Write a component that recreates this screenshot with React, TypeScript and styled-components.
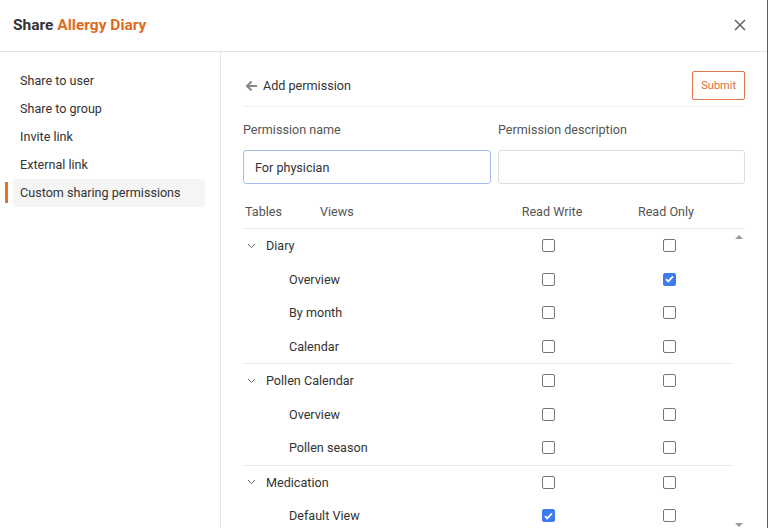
import React from 'react';
import styled, { createGlobalStyle } from 'styled-components';

const GlobalStyle = createGlobalStyle`
  html, body {
    margin: 0;
    padding: 0;
    overflow: hidden;
    background: #ffffff;
  }
  * {
    box-sizing: border-box;
  }
`;

const Dialog = styled.div`
  width: 768px;
  height: 528px;
  display: flex;
  flex-direction: column;
  font-family: Roboto, 'Liberation Sans', sans-serif;
  color: #333333;
  font-size: 12.6px;
  border-right: 1px solid #5f5f5f;
  overflow: hidden;
`;

const Header = styled.div`
  height: 52px;
  flex-shrink: 0;
  display: flex;
  align-items: center;
  justify-content: space-between;
  padding: 0 20px 2px 13px;
  border-bottom: 1px solid #e4e4e4;
`;

const Title = styled.div`
  font-size: 15.5px;
  font-weight: 700;
  color: #333333;
`;

const Accent = styled.span`
  color: #e06b1f;
`;

const CloseButton = styled.button`
  border: none;
  background: none;
  padding: 0;
  width: 14px;
  height: 14px;
  display: flex;
  align-items: center;
  justify-content: center;
  cursor: pointer;
`;

const Body = styled.div`
  flex: 1;
  display: flex;
  min-height: 0;
`;

const Sidebar = styled.div`
  width: 221px;
  flex-shrink: 0;
  border-right: 1px solid #e8e8e8;
  padding: 15px 15px 0 13px;
  display: flex;
  flex-direction: column;
`;

const NavItem = styled.div<{ $active?: boolean }>`
  position: relative;
  height: 28px;
  line-height: 28px;
  padding-left: 7px;
  color: #333333;
  background: ${p => (p.$active ? '#f5f5f5' : 'transparent')};
  border-radius: 2px;
  &::before {
    content: '';
    display: ${p => (p.$active ? 'block' : 'none')};
    position: absolute;
    left: -8px;
    top: 3px;
    width: 3px;
    height: 21px;
    background: #e8701f;
  }
`;

const Main = styled.div`
  flex: 1;
  padding: 19px 22px 0 22px;
  display: flex;
  flex-direction: column;
  min-width: 0;
`;

const TopRow = styled.div`
  display: flex;
  align-items: center;
  justify-content: space-between;
  padding-bottom: 6px;
  border-bottom: 1px solid #f0f0f0;
`;

const BackLink = styled.div`
  display: flex;
  align-items: center;
  gap: 5px;
  padding-left: 2px;
  color: #333333;
`;

const SubmitButton = styled.button`
  height: 29px;
  padding: 0 8px;
  border: 1px solid #e07548;
  border-radius: 2px;
  background: #ffffff;
  color: #e06b3a;
  font-family: Roboto, 'Liberation Sans', sans-serif;
  font-size: 11px;
`;

const FieldRow = styled.div`
  display: grid;
  grid-template-columns: 248px 247px;
  column-gap: 7px;
  margin-top: 15px;
`;

const Field = styled.div`
  display: flex;
  flex-direction: column;
  gap: 12px;
`;

const Label = styled.div`
  color: #555555;
  line-height: 16px;
`;

const Input = styled.input<{ $focused?: boolean }>`
  height: 34px;
  border: 1px solid ${p => (p.$focused ? '#a7bff0' : '#dddddd')};
  border-radius: 3px;
  padding: 0 11px;
  font-family: Roboto, 'Liberation Sans', sans-serif;
  font-size: 12.6px;
  color: #333333;
  outline: none;
`;

const TableHead = styled.div`
  display: grid;
  grid-template-columns: 248px 114px 128px 13px;
  height: 34px;
  margin-top: 11px;
  align-items: center;
  border-bottom: 1px solid #e8e8e8;
  color: #555555;
`;

const HeadNames = styled.div`
  display: flex;
  gap: 38px;
  padding-left: 2px;
`;

const HeadCell = styled.div<{ $shift?: number }>`
  text-align: center;
  transform: translateX(${p => p.$shift || 0}px);
`;

const ScrollArea = styled.div`
  flex: 1;
  display: flex;
  min-height: 0;
`;

const Rows = styled.div`
  width: 490px;
  display: flex;
  flex-direction: column;
`;

const Group = styled.div<{ $first?: boolean }>`
  border-top: ${p => (p.$first ? 'none' : '1px solid #e8e8e8')};
`;

const Row = styled.div`
  display: grid;
  grid-template-columns: 248px 114px 128px;
  height: 33.5px;
  align-items: center;
`;

const NameCell = styled.div<{ $indent: number }>`
  display: flex;
  align-items: center;
  gap: 10px;
  padding-left: ${p => p.$indent}px;
  color: #333333;
`;

const CheckCell = styled.div`
  display: flex;
  justify-content: center;
`;

const Box = styled.span<{ $checked?: boolean }>`
  width: 13px;
  height: 13px;
  border-radius: 2px;
  border: 1px solid ${p => (p.$checked ? '#3c7bf0' : '#767676')};
  background: ${p => (p.$checked ? '#3c7bf0' : '#ffffff')};
  display: flex;
  align-items: center;
  justify-content: center;
`;

const ScrollTrack = styled.div`
  width: 13px;
  display: flex;
  flex-direction: column;
  justify-content: space-between;
  align-items: center;
  padding: 6px 0 1px 0;
`;

const Arrow = styled.span<{ $down?: boolean }>`
  width: 0;
  height: 0;
  border-left: 4px solid transparent;
  border-right: 4px solid transparent;
  ${p =>
    p.$down
      ? 'border-top: 4px solid #9a9a9a;'
      : 'border-bottom: 4px solid #9a9a9a;'}
`;

const Chevron = () => (
  <svg width="9" height="6" viewBox="0 0 9 6">
    <path d="M1 1l3.5 3.5L8 1" fill="none" stroke="#666" strokeWidth="1" />
  </svg>
);

const Check: React.FC<{ checked?: boolean }> = ({ checked }) => (
  <CheckCell>
    <Box $checked={checked}>
      {checked && (
        <svg width="9" height="8" viewBox="0 0 9 8">
          <path d="M1 4.2l2.2 2.2L8 1.4" fill="none" stroke="#fff" strokeWidth="1.8" />
        </svg>
      )}
    </Box>
  </CheckCell>
);

interface TableData {
  name: string;
  rw?: boolean;
  ro?: boolean;
  views: { name: string; rw?: boolean; ro?: boolean }[];
}

const tables: TableData[] = [
  {
    name: 'Diary',
    views: [{ name: 'Overview', ro: true }, { name: 'By month' }, { name: 'Calendar' }],
  },
  {
    name: 'Pollen Calendar',
    views: [{ name: 'Overview' }, { name: 'Pollen season' }],
  },
  {
    name: 'Medication',
    views: [{ name: 'Default View', rw: true }],
  },
];

const navItems = [
  'Share to user',
  'Share to group',
  'Invite link',
  'External link',
  'Custom sharing permissions',
];

export default function App() {
  return (
    <>
      <GlobalStyle />
      <Dialog>
        <Header>
          <Title>
            Share <Accent>Allergy Diary</Accent>
          </Title>
          <CloseButton aria-label="close">
            <svg width="12" height="12" viewBox="0 0 12 12">
              <path d="M1 1l10 10M11 1L1 11" stroke="#666" strokeWidth="1.6" />
            </svg>
          </CloseButton>
        </Header>
        <Body>
          <Sidebar>
            {navItems.map((item, i) => (
              <NavItem key={item} $active={i === navItems.length - 1}>
                {item}
              </NavItem>
            ))}
          </Sidebar>
          <Main>
            <TopRow>
              <BackLink>
                <svg width="13" height="12" viewBox="0 0 13 12">
                  <path d="M12 6H2M6.5 1.5L2 6l4.5 4.5" fill="none" stroke="#888" strokeWidth="2" />
                </svg>
                Add permission
              </BackLink>
              <SubmitButton>Submit</SubmitButton>
            </TopRow>
            <FieldRow>
              <Field>
                <Label>Permission name</Label>
                <Input $focused defaultValue="For physician" />
              </Field>
              <Field>
                <Label>Permission description</Label>
                <Input />
              </Field>
            </FieldRow>
            <TableHead>
              <HeadNames>
                <span>Tables</span>
                <span>Views</span>
              </HeadNames>
              <HeadCell $shift={4}>Read Write</HeadCell>
              <HeadCell $shift={-3}>Read Only</HeadCell>
              <span />
            </TableHead>
            <ScrollArea>
              <Rows>
                {tables.map((t, i) => (
                  <Group key={t.name} $first={i === 0}>
                    <Row>
                      <NameCell $indent={4}>
                        <Chevron />
                        {t.name}
                      </NameCell>
                      <Check checked={t.rw} />
                      <Check checked={t.ro} />
                    </Row>
                    {t.views.map(v => (
                      <Row key={v.name}>
                        <NameCell $indent={46}>{v.name}</NameCell>
                        <Check checked={v.rw} />
                        <Check checked={v.ro} />
                      </Row>
                    ))}
                  </Group>
                ))}
              </Rows>
              <ScrollTrack>
                <Arrow />
                <Arrow $down />
              </ScrollTrack>
            </ScrollArea>
          </Main>
        </Body>
      </Dialog>
    </>
  );
}
